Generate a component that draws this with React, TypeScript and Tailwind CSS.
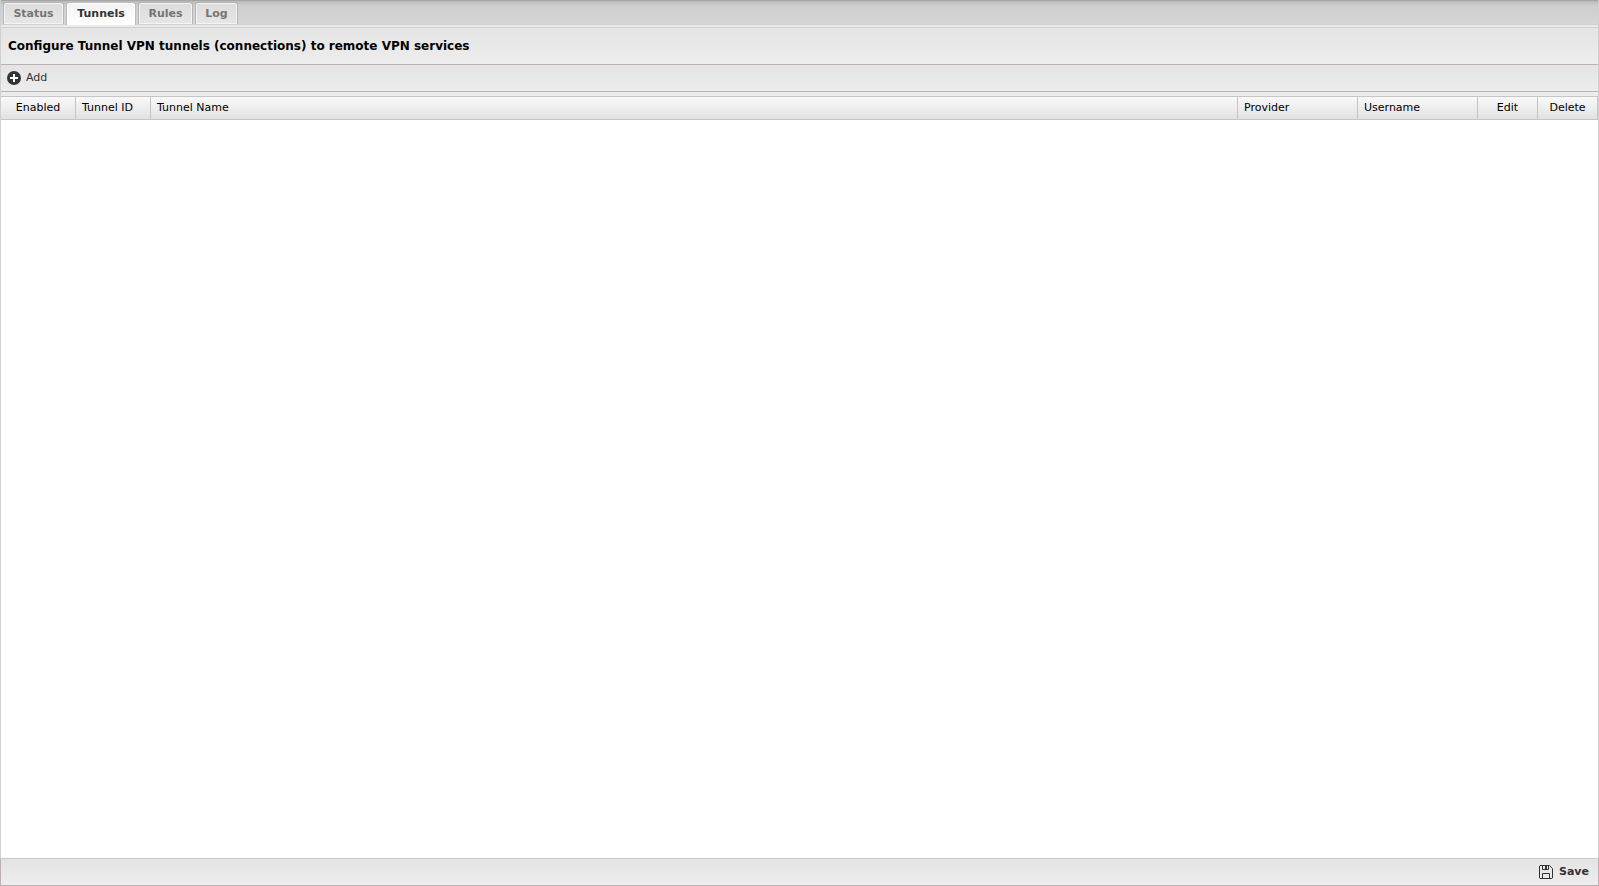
import clsx from 'clsx'

const tabs = [
  { label: 'Status', width: 'w-[61px]' },
  { label: 'Tunnels', width: 'w-[70px]' },
  { label: 'Rules', width: 'w-[55px]' },
  { label: 'Log', width: 'w-[43px]' },
]

const columns = [
  { label: 'Enabled', width: 'w-[75px]', align: 'text-center' },
  { label: 'Tunnel ID', width: 'w-[75px]', align: 'text-left' },
  { label: 'Tunnel Name', width: '', align: 'text-left' },
  { label: 'Provider', width: 'w-[120px]', align: 'text-left' },
  { label: 'Username', width: 'w-[120px]', align: 'text-left' },
  { label: 'Edit', width: 'w-[60px]', align: 'text-center' },
  { label: 'Delete', width: 'w-[60px]', align: 'text-center' },
]

const AddIcon = () => (
  <svg className="size-[14px]" viewBox="0 0 14 14" aria-hidden="true">
    <circle cx="7" cy="7" r="7" fill="#333333" />
    <path d="M6 3h2v3h3v2H8v3H6V8H3V6h3z" fill="#ffffff" />
  </svg>
)

const SaveIcon = () => (
  <svg className="size-[14px]" viewBox="0 0 14 14" aria-hidden="true" fill="none" stroke="#333333">
    <path d="M1 .5h9.5l3 3V13l-.5.5H1L.5 13V1z" />
    <path d="M3.5 13.5v-5h7v5M3.5.5v4h6v-4" />
    <path d="M6 1h2v3H6z" fill="#333333" stroke="none" />
  </svg>
)

const TabBar = ({ active }: { active: string }) => (
  <div
    role="tablist"
    className="flex h-6 shrink-0 items-start gap-[2px] border-t border-[#a5a5a5] bg-linear-to-b from-[#bababa] via-[#cecece] via-20% to-[#d6d6d6] pt-px pl-[2px]"
  >
    {tabs.map(({ label, width }) => (
      <button
        key={label}
        type="button"
        role="tab"
        aria-selected={label === active}
        className={clsx(
          'shrink-0 rounded-t-[3px] border border-b-0 text-center font-bold',
          width,
          label === active
            ? 'z-10 h-[23px] border-[#bcbcbc] bg-linear-to-b from-[#f2f2f2] to-white pb-px text-[#333333] inset-shadow-[0_0_0_1px_#ffffff]'
            : 'h-[22px] border-[#b5b5b5] bg-linear-to-b from-[#dcdcdc] to-[#e6e6e6] text-[#757575] inset-shadow-[0_0_0_1px_#f4f4f4]',
        )}
      >
        {label}
      </button>
    ))}
  </div>
)

const TunnelGrid = () => (
  <div className="flex-1 bg-white">
    <table className="w-full table-fixed border-separate border-spacing-0">
      <thead>
        <tr className="h-6">
          {columns.map(({ label, width, align }) => (
            <th
              key={label}
              scope="col"
              className={clsx(
                'border-y border-r border-[#c5c5c5] bg-linear-to-b from-[#f9f9f9] to-[#e3e2e3] px-[6px] pb-[2px] font-normal text-black',
                width,
                align,
              )}
            >
              {label}
            </th>
          ))}
        </tr>
      </thead>
      <tbody />
    </table>
  </div>
)

export default function App() {
  return (
    <div className="flex h-screen flex-col bg-[#e8e8e8] font-['DejaVu_Sans',sans-serif] text-[11px] leading-[13px]">
      <main className="flex flex-1 flex-col border-x border-[#d0d0d0]">
        <TabBar active="Tunnels" />
        <div className="h-1 shrink-0 border-y border-[#d0d0d0] bg-[#eaeaea]" />
        <header className="flex h-[37px] shrink-0 items-center border-b border-[#bcb0b0] bg-linear-to-b from-[#e4e4e4] to-[#ededed] px-[7px] pt-px">
          <h1 className="text-[12px] font-bold text-black">
            Configure Tunnel VPN tunnels (connections) to remote VPN services
          </h1>
        </header>
        <div className="flex h-[27px] shrink-0 items-center border-b border-[#bcb0b0] bg-linear-to-b from-[#e4e4e4] to-[#ededed] px-[6px]">
          <button type="button" className="flex items-center gap-[5px] text-[#333333]">
            <AddIcon />
            <span className="pb-[2px]">Add</span>
          </button>
        </div>
        <div className="h-1 shrink-0 bg-[#ececec]" />
        <TunnelGrid />
      </main>
      <footer className="flex h-7 shrink-0 items-center justify-end border border-t-[#c9c9c9] border-r-[#bcb0b0] border-b-[#bcb0b0] border-l-[#bcb0b0] bg-linear-to-b from-[#e4e4e4] to-[#ededed] pr-[9px] pb-px">
        <button type="button" className="flex items-center gap-[6px] font-bold text-[#333333]">
          <SaveIcon />
          <span className="pb-px">Save</span>
        </button>
      </footer>
    </div>
  )
}
